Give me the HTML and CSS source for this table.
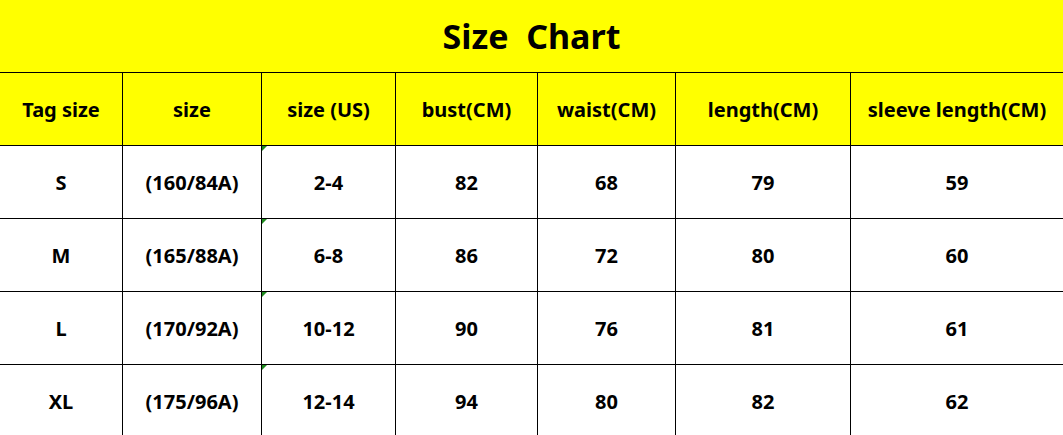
FILE: index.html
```html
<!DOCTYPE html>
<html lang="en">
<head>
<meta charset="utf-8">
<title>Size Chart</title>
<link rel="stylesheet" href="styles.css">
</head>
<body>
<div class="chart">
  <div class="title">Size&nbsp; Chart</div>
  <div class="grid">
    <div class="cell head">Tag size</div>
    <div class="cell head">size</div>
    <div class="cell head">size (US)</div>
    <div class="cell head">bust(CM)</div>
    <div class="cell head">waist(CM)</div>
    <div class="cell head">length(CM)</div>
    <div class="cell head">sleeve length(CM)</div>

    <div class="cell">S</div>
    <div class="cell">(160/84A)</div>
    <div class="cell mark">2-4</div>
    <div class="cell">82</div>
    <div class="cell">68</div>
    <div class="cell">79</div>
    <div class="cell">59</div>

    <div class="cell">M</div>
    <div class="cell">(165/88A)</div>
    <div class="cell mark">6-8</div>
    <div class="cell">86</div>
    <div class="cell">72</div>
    <div class="cell">80</div>
    <div class="cell">60</div>

    <div class="cell">L</div>
    <div class="cell">(170/92A)</div>
    <div class="cell mark">10-12</div>
    <div class="cell">90</div>
    <div class="cell">76</div>
    <div class="cell">81</div>
    <div class="cell">61</div>

    <div class="cell">XL</div>
    <div class="cell">(175/96A)</div>
    <div class="cell mark">12-14</div>
    <div class="cell">94</div>
    <div class="cell">80</div>
    <div class="cell">82</div>
    <div class="cell">62</div>
  </div>
</div>
</body>
</html>
```
FILE: styles.css
```css
html, body {
  margin: 0;
  padding: 0;
  overflow: hidden;
  background: #ffffff;
}
.chart {
  width: 1063px;
  font-family: "Noto Sans", "Open Sans", sans-serif;
  font-weight: 700;
  color: #000;
}
.title {
  height: 72px;
  background: #ffff00;
  display: flex;
  align-items: center;
  justify-content: center;
  font-size: 34px;
  white-space: pre;
  border-bottom: 1px solid #000;
}
.grid {
  display: grid;
  grid-template-columns: 122px 138px 133px 141px 137px 174px 212px;
  grid-auto-rows: 72px;
  column-gap: 1px;
  row-gap: 1px;
  background: #000;
}
.cell {
  position: relative;
  background: #fff;
  display: flex;
  align-items: center;
  justify-content: center;
  font-size: 20px;
  white-space: nowrap;
}
.cell.head {
  background: #ffff00;
}
.cell.mark::before {
  content: "";
  position: absolute;
  left: 0;
  top: 0;
  border-top: 5px solid #1e8a1e;
  border-right: 5px solid transparent;
}
```
